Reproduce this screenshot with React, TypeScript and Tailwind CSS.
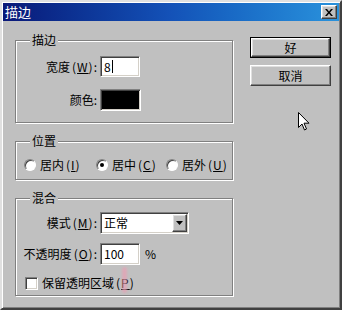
import type { ReactNode } from 'react';

const FONT = { fontFamily: '"Noto Sans CJK SC", "Liberation Sans", sans-serif' };

const sunken =
  'border border-t-[#808080] border-l-[#808080] border-b-white border-r-white shadow-[inset_1px_1px_0_#404040,inset_-1px_-1px_0_#d4d0c8]';

const raised =
  'border border-t-white border-l-white border-b-[#404040] border-r-[#404040] shadow-[inset_-1px_-1px_0_#808080,inset_1px_1px_0_#dfdfdf]';

/** Etched group box with a caption sitting on its top edge. */
function GroupBox({ title, className, children }: { title: string; className: string; children: ReactNode }) {
  return (
    <div className={`relative border border-[#808080] shadow-[inset_1px_1px_0_#fff,1px_1px_0_#fff] ${className}`}>
      <span className="absolute -top-[8px] left-[14px] bg-[#c0c0c0] px-[2px] text-[12px] leading-[14px]">
        {title}
      </span>
      {children}
    </div>
  );
}

/** Mnemonic in parentheses, e.g. (W), with the letter underlined. */
function Hot({ k }: { k: string }) {
  return (
    <span className="ml-[2px] tracking-[1px]">
      (<u>{k}</u>)
    </span>
  );
}

function Radio({ label, hot, checked, width }: { label: string; hot: string; checked?: boolean; width: string }) {
  return (
    <div className={`flex shrink-0 items-center gap-[4px] ${width}`}>
      <span className="flex h-[12px] w-[12px] shrink-0 items-center justify-center rounded-full border border-t-[#808080] border-l-[#808080] border-b-white border-r-white bg-white shadow-[inset_1px_1px_0_#404040]">
        {checked && <span className="h-[4px] w-[4px] rounded-full bg-black" />}
      </span>
      <span className="whitespace-nowrap text-[12px] leading-[14px]">
        {label}
        <Hot k={hot} />
      </span>
    </div>
  );
}

function Cursor() {
  return (
    <svg className="absolute left-[296px] top-[110px]" width="12" height="19" viewBox="0 0 12 19">
      <path
        d="M0.5 0.5 L0.5 15.5 L4 12 L6.5 18 L8.5 17 L6 11.2 L11 11.2 Z"
        fill="#fff"
        stroke="#000"
        strokeWidth="1"
        strokeLinejoin="miter"
      />
    </svg>
  );
}

export default function App() {
  return (
    <div
      className="relative h-[310px] w-[342px] border-2 border-t-[#e0e0e0] border-l-[#e0e0e0] border-b-[#404040] border-r-[#404040] bg-[#c0c0c0] p-[1px] text-black shadow-[inset_1px_1px_0_#fff,inset_-1px_-1px_0_#808080]"
      style={FONT}
    >
      <div className="flex h-[18px] items-center justify-between bg-gradient-to-r from-[#0a1878] via-[#1452b8] to-[#2a92dc] pl-[2px] pr-[2px]">
        <span className="text-[13px] leading-[16px] text-white">描边</span>
        <button
          type="button"
          className={`flex h-[14px] w-[16px] items-center justify-center bg-[#c0c0c0] ${raised}`}
          aria-label="关闭"
        >
          <svg width="8" height="7" viewBox="0 0 8 7">
            <path d="M0 0 L2 0 L4 2.5 L6 0 L8 0 L5 3.5 L8 7 L6 7 L4 4.5 L2 7 L0 7 L3 3.5 Z" fill="#000" />
          </svg>
        </button>
      </div>

      <div className="flex">
        <div className="ml-[12px] mt-[19px] flex w-[218px] shrink-0 flex-col gap-[18px]">
          <GroupBox title="描边" className="h-[83px]">
            <div className="grid grid-cols-[81px_auto] items-center gap-x-[3px] gap-y-[12px] pt-[15px]">
              <span className="whitespace-nowrap text-right text-[12px] leading-[14px]">
                宽度<Hot k="W" />:
              </span>
              <div className={`flex h-[21px] w-[40px] items-center bg-white pl-[3px] text-[12px] leading-[14px] ${sunken}`}>
                8<span className="ml-[1px] h-[13px] w-[1px] bg-black" />
              </div>
              <span className="text-right text-[12px] leading-[14px]">颜色:</span>
              <div className={`h-[22px] w-[41px] bg-black ${sunken}`} />
            </div>
          </GroupBox>

          <GroupBox title="位置" className="h-[39px]">
            <div className="flex pl-[8px] pt-[16px]">
              <Radio label="居内" hot="I" width="w-[72px]" />
              <Radio label="居中" hot="C" checked width="w-[70px]" />
              <Radio label="居外" hot="U" width="w-auto" />
            </div>
          </GroupBox>

          <GroupBox title="混合" className="h-[98px]">
            <div className="grid grid-cols-[81px_auto] items-center gap-x-[3px] gap-y-[9px] pt-[13px]">
              <span className="whitespace-nowrap text-right text-[12px] leading-[14px]">
                模式<Hot k="M" />:
              </span>
              <div className={`flex h-[22px] w-[89px] items-center justify-between bg-white pl-[3px] pr-[1px] text-[12px] leading-[14px] ${sunken}`}>
                正常
                <span className={`flex h-[18px] w-[15px] items-center justify-center bg-[#c0c0c0] ${raised}`}>
                  <svg width="7" height="4" viewBox="0 0 7 4">
                    <path d="M0 0 L7 0 L3.5 4 Z" fill="#000" />
                  </svg>
                </span>
              </div>
              <span className="whitespace-nowrap text-right text-[12px] leading-[14px]">
                不透明度<Hot k="O" />:
              </span>
              <div className="flex items-center gap-[5px]">
                <div className={`flex h-[22px] w-[40px] items-center bg-white pl-[3px] text-[12px] leading-[14px] ${sunken}`}>
                  100
                </div>
                <span className="text-[12px] leading-[14px]">%</span>
              </div>
            </div>
            <div className="relative mt-[11px] flex items-center gap-[4px] pl-[9px]">
              <span className={`h-[13px] w-[13px] bg-white ${sunken}`} />
              <span className="whitespace-nowrap text-[12px] leading-[14px]">
                保留透明区域<Hot k="P" />
              </span>
              <span className="absolute left-[106px] top-[-9px] h-[26px] w-[5px] rounded-full bg-[#e8a0b4] opacity-70 blur-[1px]" />
            </div>
          </GroupBox>
        </div>

        <div className="ml-[17px] mt-[16px] flex w-[81px] flex-col gap-[7px]">
          <div className="border border-black">
            <button
              type="button"
              className={`flex h-[19px] w-full items-center justify-center bg-[#c0c0c0] text-[12px] leading-[14px] ${raised}`}
            >
              好
            </button>
          </div>
          <button
            type="button"
            className={`flex h-[21px] w-full items-center justify-center bg-[#c0c0c0] text-[12px] leading-[14px] ${raised}`}
          >
            取消
          </button>
        </div>
      </div>

      <Cursor />
    </div>
  );
}
